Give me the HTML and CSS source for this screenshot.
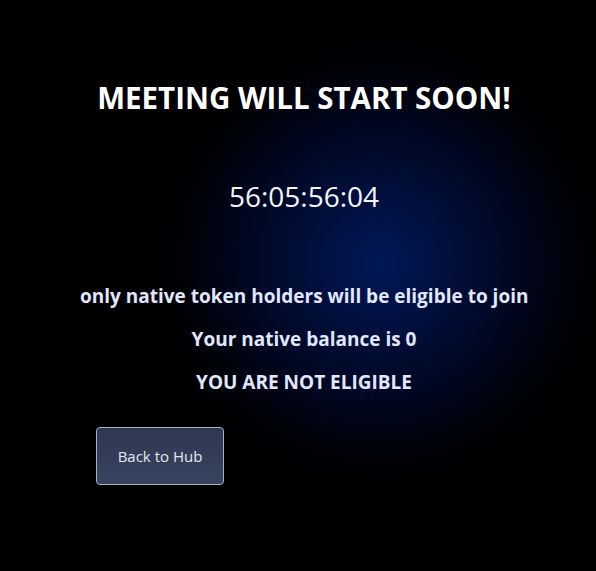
FILE: index.html
```html
<!DOCTYPE html>
<html>
<head>
<meta charset="utf-8">
<link rel="stylesheet" href="styles.css">
</head>
<body>
<main class="page">
  <section class="panel">
    <h1 class="title">MEETING WILL START SOON!</h1>
    <div class="timer">56:05:56:04</div>
    <div class="info">
      <p class="line">only native token holders will be eligible to join</p>
      <p class="line">Your native balance is 0</p>
      <p class="line">YOU ARE NOT ELIGIBLE</p>
    </div>
    <div class="actions">
      <button class="back-btn">Back to Hub</button>
    </div>
  </section>
</main>
</body>
</html>
```
FILE: styles.css
```css
html, body {
  margin: 0;
  padding: 0;
  height: 100%;
}
body {
  background-color: #000;
  background-image: radial-gradient(circle 230px at 380px 262px, #011858 0%, #010f3c 30%, #00061e 62%, #000207 85%, #000 100%);
  font-family: "Open Sans", "Noto Sans", sans-serif;
  color: #fff;
}
.page {
  padding-top: 78px;
}
.panel {
  margin-left: 80px;
  width: 448px;
  text-align: center;
}
.title {
  margin: 0;
  font-size: 29.5px;
  font-weight: 700;
  line-height: 40px;
  color: #fff;
}
.timer {
  margin-top: 58px;
  font-size: 28px;
  font-weight: 400;
  line-height: 40px;
  color: #f4f6ff;
}
.info {
  margin-top: 68px;
  display: flex;
  flex-direction: column;
  gap: 19px;
}
.line {
  margin: 0;
  font-size: 19px;
  font-weight: 700;
  line-height: 24px;
  color: #e0e7ff;
  white-space: nowrap;
}
.actions {
  margin-top: 33px;
  display: flex;
  padding-left: 16px;
}
.back-btn {
  width: 128px;
  height: 58px;
  border: 1px solid #a9afc2;
  border-radius: 4px;
  background: linear-gradient(180deg, #2e3852 0%, #38435f 100%);
  color: #e2e8f0;
  font-family: "Open Sans", "Noto Sans", sans-serif;
  font-size: 15px;
  padding: 0;
}
```
